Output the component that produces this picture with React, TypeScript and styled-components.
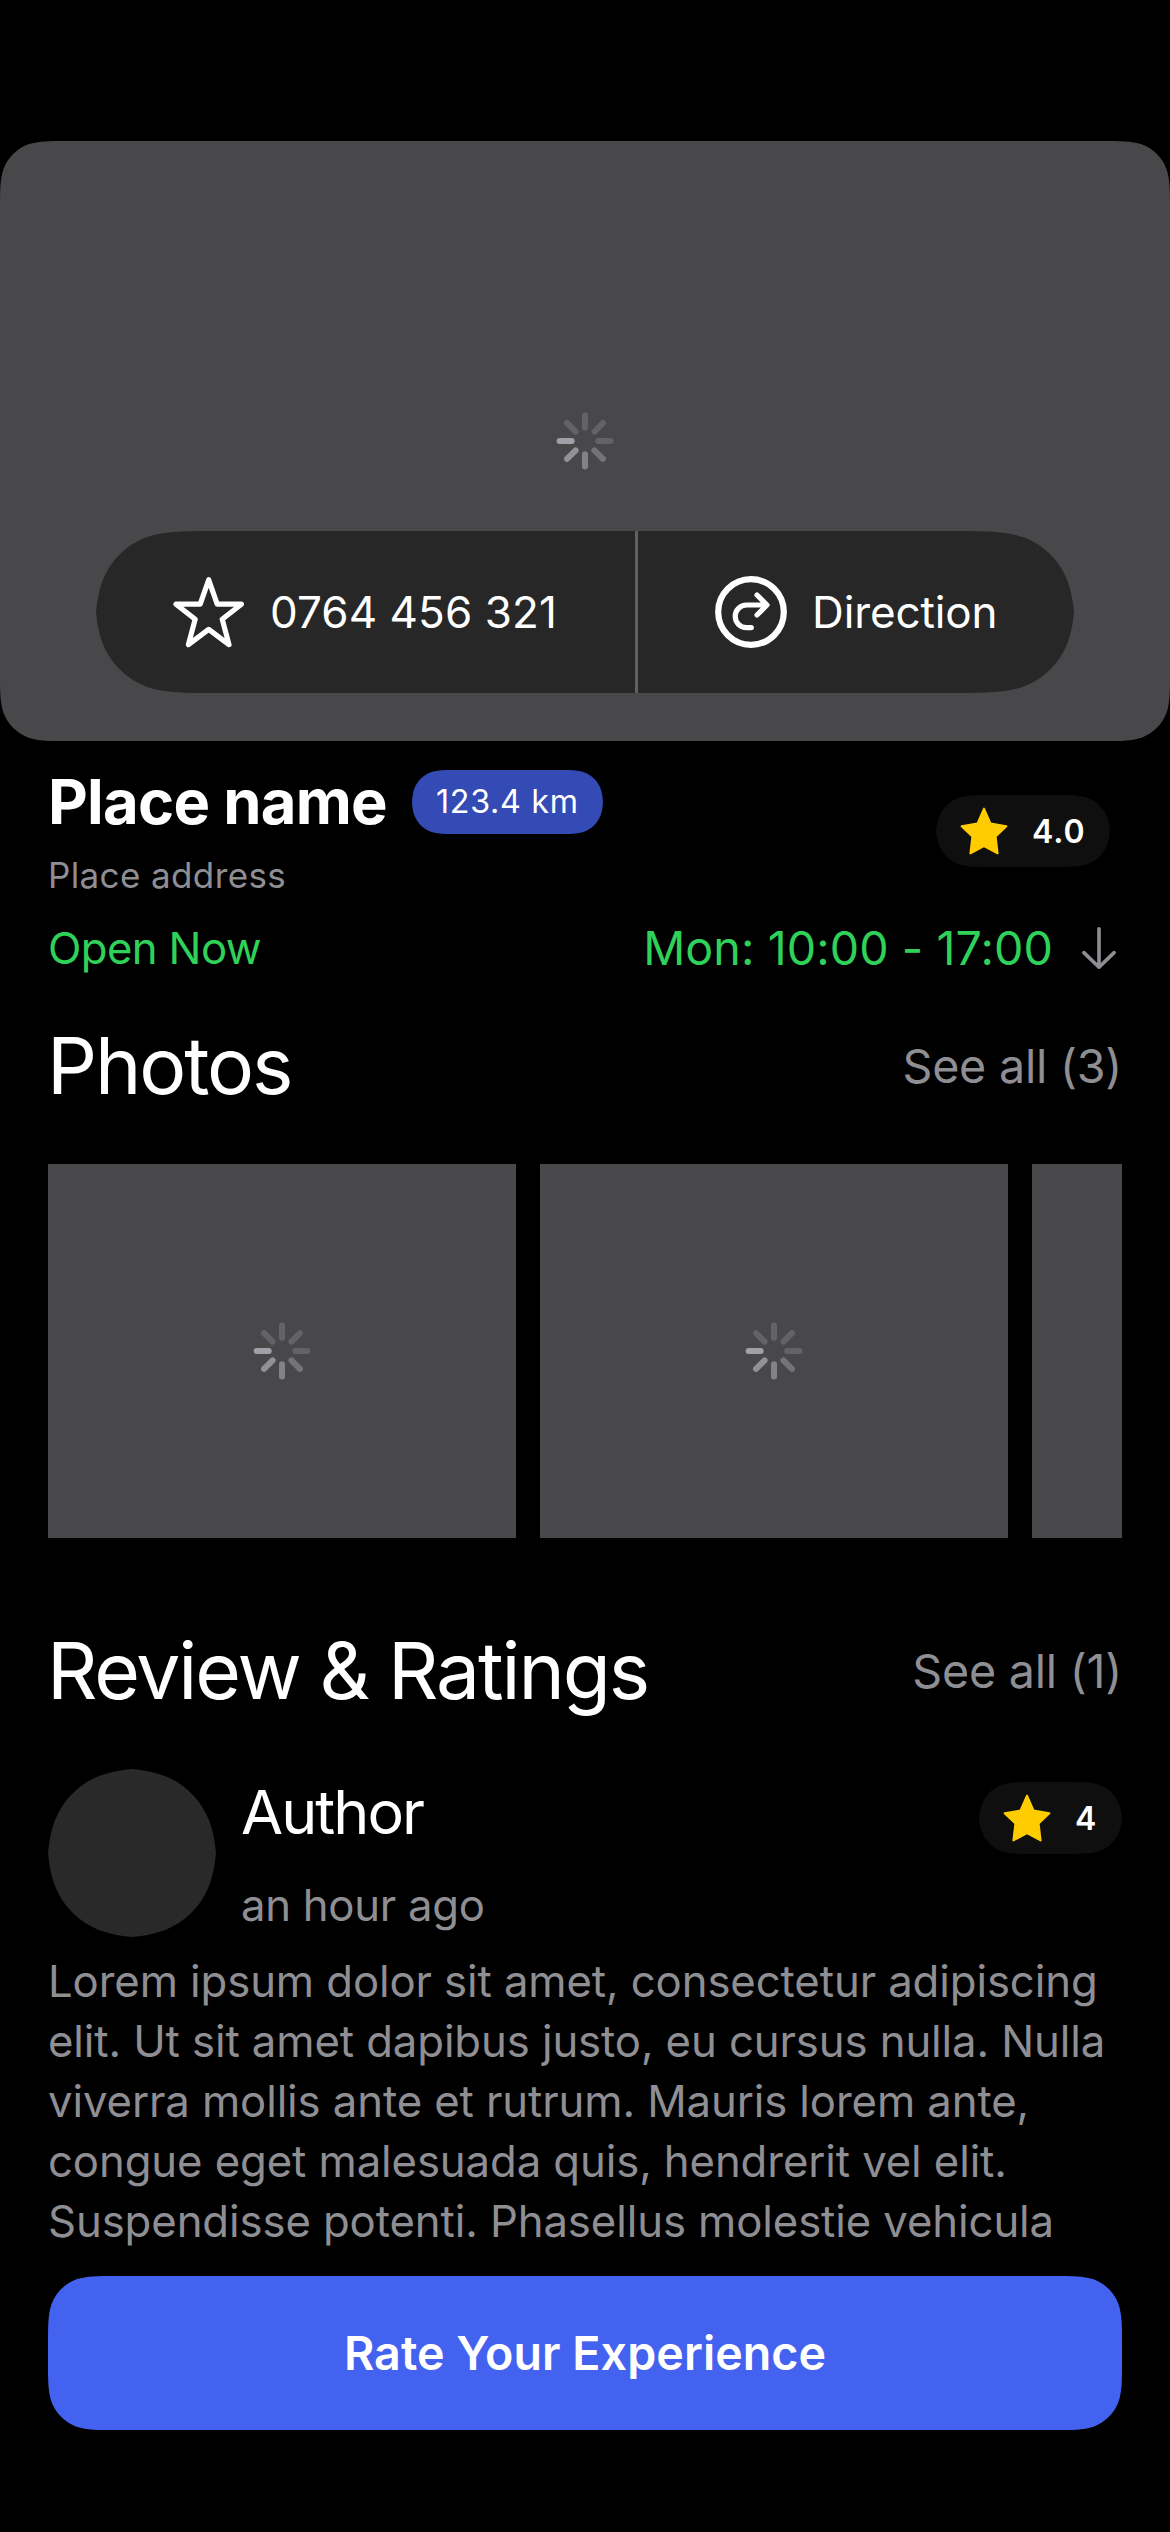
import React from "react";
import styled, { createGlobalStyle } from "styled-components";

const colors = {
  background: "#000000",
  placeholder: "#48484a",
  panel: "#272727",
  avatar: "#292929",
  chip: "#0f0f0f",
  divider: "#606060",
  label: "#ffffff",
  secondary: "#8e8e93",
  green: "#30d158",
  yellow: "#ffcc00",
  accent: "#4462f0",
  accentDim: "#344ab4",
};

/** Outline of a rounded rectangle with continuous (smoothed) corners. */
function continuousCorners(w: number, h: number, r: number): string {
  const axis = (limit: number) =>
    1.52866 * r <= limit
      ? [1.08849 * r, 0.86841 * r, 1.52866 * r, 0, 0]
      : [0.88 * r, 0.75 * r, limit, 0.011 * r, 0.032 * r];
  const [x1, x2, xe, xo1, xo2] = axis(w / 2);
  const [y1, y2, ye, yo1, yo2] = axis(h / 2);
  const a = 0.63149 * r;
  const b = 0.07491 * r;
  const c = 0.37282 * r;
  const d = 0.16906 * r;
  const n = (v: number) => v.toFixed(2);
  const p = (x: number, y: number) => `${n(x)} ${n(y)}`;
  return [
    `M${p(xe, 0)}`,
    `L${p(w - xe, 0)}`,
    `C${p(w - x1, xo1)} ${p(w - x2, xo2)} ${p(w - a, b)}`,
    `C${p(w - c, d)} ${p(w - d, c)} ${p(w - b, a)}`,
    `C${p(w - yo2, y2)} ${p(w - yo1, y1)} ${p(w, ye)}`,
    `L${p(w, h - ye)}`,
    `C${p(w - yo1, h - y1)} ${p(w - yo2, h - y2)} ${p(w - b, h - a)}`,
    `C${p(w - d, h - c)} ${p(w - c, h - d)} ${p(w - a, h - b)}`,
    `C${p(w - x2, h - xo2)} ${p(w - x1, h - xo1)} ${p(w - xe, h)}`,
    `L${p(xe, h)}`,
    `C${p(x1, h - xo1)} ${p(x2, h - xo2)} ${p(a, h - b)}`,
    `C${p(c, h - d)} ${p(d, h - c)} ${p(b, h - a)}`,
    `C${p(yo2, h - y2)} ${p(yo1, h - y1)} ${p(0, h - ye)}`,
    `L${p(0, ye)}`,
    `C${p(yo1, y1)} ${p(yo2, y2)} ${p(b, a)}`,
    `C${p(d, c)} ${p(c, d)} ${p(a, b)}`,
    `C${p(x2, xo2)} ${p(x1, xo1)} ${p(xe, 0)}Z`,
  ].join("");
}

const GlobalStyle = createGlobalStyle`
  *, *::before, *::after { box-sizing: border-box; }
  body {
    margin: 0;
    background: ${colors.background};
    color: ${colors.label};
    font-family: Inter, Roboto, "Liberation Sans", sans-serif;
  }
  h1, h2, h3, p { margin: 0; font-weight: 400; }
  button { font: inherit; color: inherit; border: 0; padding: 0; background: none; }
  svg { display: block; flex: none; }
`;

const Screen = styled.main`
  display: flex;
  flex-direction: column;
  width: 1170px;
  height: 2532px;
  padding-top: 141px;
  overflow: hidden;
  background: ${colors.background};
`;

const Hero = styled.section`
  flex: none;
  display: grid;
  grid-template-rows: 390px 162px 48px;
  justify-items: center;
  height: 600px;
  background: ${colors.placeholder};
  clip-path: path("${continuousCorners(1170, 600, 45)}");
`;

const HeroLoader = styled.div`
  display: flex;
  align-items: flex-end;
  padding-bottom: 60px;
`;

const Actions = styled.div`
  display: flex;
  width: 978px;
  height: 162px;
  background: ${colors.panel};
  clip-path: path("${continuousCorners(978, 162, 81)}");
`;

const Action = styled.button<{ $tracking: number }>`
  flex: none;
  display: flex;
  align-items: center;
  gap: 25px;
  padding: 0 77px;
  font-size: 44px;
  line-height: 54px;
  letter-spacing: ${(p) => p.$tracking}px;
  white-space: nowrap;

  &:first-child {
    width: 539px;
    padding-right: 0;
  }

  & + & {
    flex: 1;
    border-left: 3px solid ${colors.divider};
    padding-right: 0;
  }
`;

const Content = styled.div`
  display: flex;
  flex-direction: column;
  padding: 29px 48px 0;
`;

const PlaceHeader = styled.header`
  display: flex;
  align-items: center;
  justify-content: space-between;
  height: 122px;
  padding-right: 12px;
`;

const PlaceInfo = styled.div`
  display: flex;
  flex-direction: column;
  gap: 24px;
`;

const NameRow = styled.div`
  display: flex;
  align-items: center;
  gap: 25px;
`;

const PlaceName = styled.h1`
  font-size: 61.5px;
  font-weight: 700;
  line-height: 64px;
  letter-spacing: -0.74px;
`;

const Distance = styled.span`
  width: 191px;
  height: 64px;
  padding-left: 24px;
  font-size: 32.3px;
  line-height: 64px;
  letter-spacing: 0.68px;
  white-space: nowrap;
  background: ${colors.accentDim};
  clip-path: path("${continuousCorners(191, 64, 30)}");
`;

const Address = styled.p`
  font-size: 35px;
  line-height: 34px;
  letter-spacing: 0.38px;
  color: ${colors.secondary};
`;

const Chip = styled.div<{ $width: number }>`
  flex: none;
  display: flex;
  align-items: center;
  gap: 24px;
  width: ${(p) => p.$width}px;
  height: 72px;
  padding-left: 24px;
  font-size: 32px;
  font-weight: 600;
  letter-spacing: 0.98px;
  background: ${colors.chip};
  clip-path: path("${(p) => continuousCorners(p.$width, 72, 36)}");
`;

const HoursRow = styled.div`
  display: flex;
  align-items: center;
  justify-content: space-between;
  height: 60px;
  margin-top: 26px;
  color: ${colors.green};
`;

const OpenState = styled.span`
  font-size: 43.7px;
  letter-spacing: -0.62px;
`;

const Hours = styled.div`
  display: flex;
  align-items: center;
  gap: 28px;
  padding-right: 5px;
  font-size: 46.6px;
  letter-spacing: 0.09px;
`;

const SectionHeader = styled.div<{ $top: number }>`
  display: flex;
  align-items: center;
  justify-content: space-between;
  height: 96px;
  margin-top: ${(p) => p.$top}px;
  margin-bottom: 50px;
`;

const SectionTitle = styled.h2`
  margin-left: -1px;
  font-size: 78.5px;
  line-height: 96px;
  letter-spacing: -2.12px;
`;

const SeeAll = styled.button`
  font-size: 46.6px;
  line-height: 60px;
  letter-spacing: -0.22px;
  color: ${colors.secondary};
`;

const PhotoStrip = styled.div`
  display: flex;
  gap: 24px;
  overflow: hidden;
`;

const Photo = styled.div`
  flex: none;
  display: flex;
  align-items: center;
  justify-content: center;
  width: 468px;
  height: 374px;
  background: ${colors.placeholder};
`;

const ReviewHeader = styled.div`
  display: flex;
  height: 168px;
`;

const Avatar = styled.div`
  flex: none;
  width: 168px;
  height: 168px;
  background: ${colors.avatar};
  clip-path: path("${continuousCorners(168, 168, 84)}");
`;

const AuthorInfo = styled.div`
  flex: 1;
  display: flex;
  flex-direction: column;
  gap: 29px;
  padding: 5px 0 0 25px;
`;

const AuthorName = styled.h3`
  font-size: 61px;
  line-height: 76px;
  letter-spacing: -1.95px;
`;

const ReviewTime = styled.p`
  font-size: 43.7px;
  line-height: 54px;
  letter-spacing: -0.28px;
  color: ${colors.secondary};
`;

const ReviewRating = styled.div`
  padding-top: 13px;
`;

const ReviewText = styled.p`
  height: 300px;
  margin-top: 15px;
  overflow: hidden;
  font-size: 43.7px;
  line-height: 60px;
  letter-spacing: -0.1px;
  color: ${colors.secondary};
`;

const RateButton = styled.button`
  height: 154px;
  margin-top: 24px;
  font-size: 46.6px;
  font-weight: 600;
  line-height: 154px;
  letter-spacing: 0.05px;
  text-align: center;
  background: ${colors.accent};
  clip-path: path("${continuousCorners(1074, 154, 45)}");
`;

const spokes = [
  "#636267",
  "#636267",
  "#636267",
  "#747377",
  "#838286",
  "#929198",
  "#a1a0a7",
  "#636267",
];

function Spinner() {
  return (
    <svg width="60" height="60" viewBox="-30 -30 60 60" strokeWidth="6" strokeLinecap="round">
      {spokes.map((stroke, i) => (
        <line key={i} x1="0" y1="-13.3" x2="0" y2="-25.4" stroke={stroke} transform={`rotate(${i * 45})`} />
      ))}
    </svg>
  );
}

function StarOutline() {
  return (
    <svg width="72" height="72" viewBox="0 0 72 72" fill="none" stroke="#fff" strokeWidth="5.2" strokeLinecap="round" strokeLinejoin="round">
      <path d="M35.7 3.8L44.2 28.2L68.4 28.2L49.2 43.2L56 68.6L35.7 53.3L15.4 68.6L22.2 43.2L3 28.2L27.2 28.2Z" />
    </svg>
  );
}

function DirectionIcon() {
  return (
    <svg width="72" height="72" viewBox="0 0 72 72" fill="none" stroke="#fff" strokeLinecap="round" strokeLinejoin="round">
      <circle cx="36" cy="36" r="32.8" strokeWidth="6.2" />
      <path strokeWidth="5.2" d="M51.5 29H31.5A11.3 11.3 0 0 0 31.5 51.6H36.3M42 19L52 29L42 39" />
    </svg>
  );
}

function StarFilled() {
  return (
    <svg width="48" height="48" viewBox="0 0 48 48" fill={colors.yellow} stroke={colors.yellow} strokeWidth="2" strokeLinejoin="round">
      <path d="M24 1.6L30.6 16.6L46.4 19.2L35.6 29.4L37.6 46.4L24 39.2L10.4 46.4L12.4 29.4L1.6 19.2L17.4 16.6Z" />
    </svg>
  );
}

function ArrowDown() {
  return (
    <svg width="36" height="44" viewBox="0 0 36 44" fill="none" stroke={colors.secondary} strokeWidth="3.6" strokeLinecap="round" strokeLinejoin="round">
      <path d="M18 2.8V41.2M2.9 26.6L18 41.2L33.1 26.6" />
    </svg>
  );
}

export default function App() {
  return (
    <>
      <GlobalStyle />
      <Screen>
        <Hero>
          <HeroLoader>
            <Spinner />
          </HeroLoader>
          <Actions>
            <Action $tracking={0.08}>
              <StarOutline />
              0764 456 321
            </Action>
            <Action $tracking={-0.11}>
              <DirectionIcon />
              Direction
            </Action>
          </Actions>
        </Hero>

        <Content>
          <PlaceHeader>
            <PlaceInfo>
              <NameRow>
                <PlaceName>Place name</PlaceName>
                <Distance>123.4 km</Distance>
              </NameRow>
              <Address>Place address</Address>
            </PlaceInfo>
            <Chip $width={174}>
              <StarFilled />
              4.0
            </Chip>
          </PlaceHeader>

          <HoursRow>
            <OpenState>Open Now</OpenState>
            <Hours>
              Mon: 10:00 - 17:00
              <ArrowDown />
            </Hours>
          </HoursRow>

          <SectionHeader $top={40}>
            <SectionTitle>Photos</SectionTitle>
            <SeeAll>See all (3)</SeeAll>
          </SectionHeader>
          <PhotoStrip>
            {[0, 1, 2].map((id) => (
              <Photo key={id}>
                <Spinner />
              </Photo>
            ))}
          </PhotoStrip>

          <SectionHeader $top={85}>
            <SectionTitle>Review &amp; Ratings</SectionTitle>
            <SeeAll>See all (1)</SeeAll>
          </SectionHeader>
          <ReviewHeader>
            <Avatar />
            <AuthorInfo>
              <AuthorName>Author</AuthorName>
              <ReviewTime>an hour ago</ReviewTime>
            </AuthorInfo>
            <ReviewRating>
              <Chip $width={143}>
                <StarFilled />4
              </Chip>
            </ReviewRating>
          </ReviewHeader>
          <ReviewText>
            Lorem ipsum dolor sit amet, consectetur adipiscing elit. Ut sit amet dapibus justo, eu cursus
            nulla. Nulla viverra mollis ante et rutrum. Mauris lorem ante, congue eget malesuada quis,
            hendrerit vel elit. Suspendisse potenti. Phasellus molestie vehicula
          </ReviewText>

          <RateButton>Rate Your Experience</RateButton>
        </Content>
      </Screen>
    </>
  );
}
